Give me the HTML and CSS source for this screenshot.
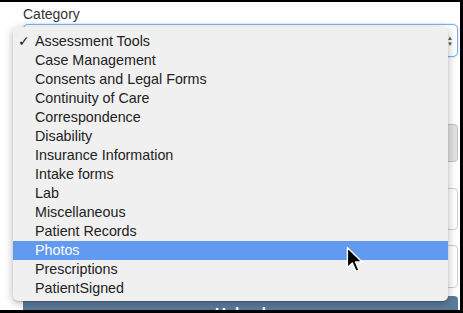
FILE: index.html
```html
<!DOCTYPE html>
<html lang="en">
<head>
    <meta charset="utf-8" />
    <title>Upload Document</title>
    <link rel="stylesheet" href="styles.css">
</head>
<body>
<div class="screen">
    <form class="upload-form">
        <label class="field-label" for="category">Category</label>
        <div class="select-box" id="category">
            <span class="select-arrows">&#9650;<br>&#9660;</span>
        </div>
        <div class="choose-btn"></div>
        <div class="text-input"></div>
        <div class="text-input second"></div>
        <div class="upload-btn">Upload</div>
    </form>

    <!-- open dropdown of the category select -->
    <ul class="menu">
        <li class="checked">Assessment Tools</li>
        <li>Case Management</li>
        <li>Consents and Legal Forms</li>
        <li>Continuity of Care</li>
        <li>Correspondence</li>
        <li>Disability</li>
        <li>Insurance Information</li>
        <li>Intake forms</li>
        <li>Lab</li>
        <li>Miscellaneous</li>
        <li>Patient Records</li>
        <li class="active">Photos</li>
        <li>Prescriptions</li>
        <li>PatientSigned</li>
    </ul>

    <svg class="cursor" width="18" height="28" viewBox="0 0 13 20">
        <path d="M1 1 L1 15.5 L4.6 12.2 L7.2 18.3 L9.4 17.3 L6.9 11.4 L11.6 11.4 Z" fill="#000" stroke="#fff" stroke-width="1" stroke-linejoin="round"/>
    </svg>
</div>
</body>
</html>
```

FILE: styles.css
```css
body {
    margin: 0;
    padding: 0;
    background-color: #fff;
    font-family: 'Liberation Sans', Arial, sans-serif;
}

.screen {
    position: relative;
    width: 460px;
    height: 308px;
    border-top: 2px solid #000;
    border-right: 3px solid #000;
    border-bottom: 3px solid #000;
    background-color: #fff;
    overflow: hidden;
}

.upload-form {
    display: flex;
    flex-direction: column;
    padding: 4px 2px 0 23px;
}

.field-label {
    font-size: 14px;
    line-height: 16px;
    color: #333;
    margin-bottom: 2px;
}

.select-box {
    position: relative;
    height: 31px;
    border: 1px solid #7fb0ea;
    border-radius: 5px;
    box-shadow: 0 0 2px #9cc4f2;
    background-color: #fff;
}

.select-arrows {
    position: absolute;
    right: 4px;
    top: 10px;
    font-size: 6px;
    line-height: 6px;
    color: #555;
}

.choose-btn {
    margin-top: 67px;
    height: 36px;
    border: 1px solid #c4c4c4;
    border-radius: 4px;
    background-color: #e2e2e2;
}

.text-input {
    margin-top: 26px;
    height: 40px;
    border: 1px solid #cfcfcf;
    border-radius: 4px;
    background-color: #fff;
}

.text-input.second {
    margin-top: 15px;
    height: 41px;
}

.upload-btn {
    margin-top: 8px;
    height: 30px;
    border-radius: 4px;
    background-color: #5b7b9b;
    color: #fff;
    font-size: 15px;
    font-weight: bold;
    text-align: center;
    padding-top: 8px;
    box-sizing: border-box;
}

.menu {
    position: absolute;
    left: 13px;
    top: 25px;
    width: 435px;
    margin: 0;
    padding: 5px 0 3px;
    list-style: none;
    background-color: #f0f0f0;
    border-radius: 5px;
    box-shadow: 0 1px 1px rgba(0, 0, 0, 0.15), 0 2px 8px rgba(0, 0, 0, 0.3);
}

.menu li {
    position: relative;
    height: 19px;
    line-height: 19px;
    padding-left: 22px;
    font-size: 14.3px;
    color: #222;
}

.menu li.checked::before {
    content: "\2713";
    position: absolute;
    left: 5px;
    top: 0;
    font-family: 'DejaVu Sans', sans-serif;
    font-size: 14px;
    font-weight: bold;
}

.menu li.active {
    background-color: #6299f1;
    color: #fff;
}

.cursor {
    position: absolute;
    left: 346px;
    top: 244px;
}
```
